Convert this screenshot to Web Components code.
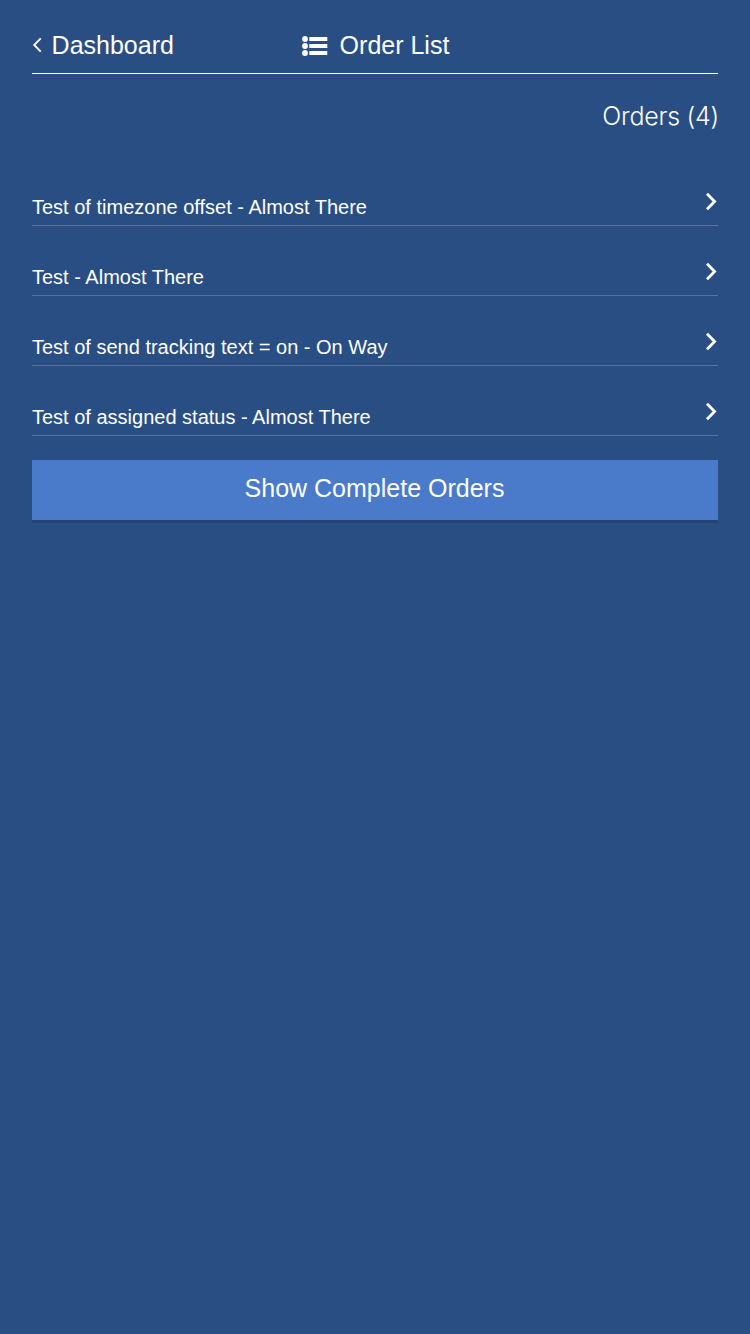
<!DOCTYPE html>
<html lang="en">
<head>
<meta charset="utf-8">
<title>Order List</title>
<style>
  html, body { margin: 0; min-height: 100%; background: #294e84; }
  body { color: #fff; font-family: "Liberation Sans", Arial, sans-serif; }
</style>
</head>
<body>
<order-app>
  <page-header slot="header" back="Dashboard">Order List</page-header>
  <order-count slot="count">Orders (4)</order-count>
  <order-row>Test of timezone offset - Almost There</order-row>
  <order-row>Test - Almost There</order-row>
  <order-row>Test of send tracking text = on - On Way</order-row>
  <order-row>Test of assigned status - Almost There</order-row>
  <action-button slot="action">Show Complete Orders</action-button>
</order-app>
<script>
const define = (name, html) => customElements.define(name, class extends HTMLElement {
  constructor() {
    super();
    const t = document.createElement('template');
    t.innerHTML = html;
    this.attachShadow({ mode: 'open' }).append(t.content.cloneNode(true));
    const back = this.shadowRoot.querySelector('.label');
    if (back) back.textContent = this.getAttribute('back');
  }
});

define('order-app', `
<style>
  :host { display: block; box-sizing: border-box; min-height: 1334px; padding: 17px 32px; }
  .list { padding-top: 20px; }
  .action { padding-top: 24px; }
</style>
<slot name="header"></slot>
<slot name="count"></slot>
<div class="list"><slot></slot></div>
<div class="action"><slot name="action"></slot></div>`);

define('page-header', `
<style>
  :host { display: grid; grid-template-columns: 1fr auto 1fr; height: 56px; align-items: center; border-bottom: 1px solid #fff; font-size: 25px; line-height: 56px; white-space: nowrap; }
  .back, .title { display: flex; align-items: center; }
  .back { gap: 9.6px; }
  .title { gap: 11.6px; padding-left: 1.4px; }
  svg { display: block; flex: none; }
  .title svg { margin-top: 2px; }
</style>
<div class="back">
  <svg width="10" height="18" viewBox="0 0 10 18"><path d="M8.7 2.3 2.2 9l6.5 6.7" fill="none" stroke="#fff" stroke-width="1.9"/></svg>
  <span class="label"></span>
</div>
<div class="title">
  <svg width="26" height="20" viewBox="0 0 26 20" fill="#fff"><circle cx="3" cy="3" r="2.9"/><circle cx="3" cy="10" r="2.9"/><circle cx="3" cy="17" r="2.9"/><path d="M7.3 1H25.3V5H7.3ZM7.3 8H25.3V12H7.3ZM7.3 15H25.3V19H7.3Z"/></svg>
  <span><slot></slot></span>
</div>
<div></div>`);

define('order-count', `
<style>
  :host { display: block; height: 82px; margin-right: -1px; text-align: right; font: 300 25px/84px Inter, sans-serif; letter-spacing: -.25px; }
</style>
<slot></slot>`);

define('order-row', `
<style>
  :host { display: flex; box-sizing: border-box; height: 70px; justify-content: space-between; border-bottom: 1px solid #5673a0; font-size: 20px; white-space: nowrap; }
  :host(:first-of-type) { height: 50px; }
  span { align-self: flex-end; line-height: 24px; margin-bottom: 6px; }
  svg { display: block; align-self: flex-end; margin-bottom: 14px; }
</style>
<span><slot></slot></span>
<svg width="14" height="20" viewBox="0 0 14 20"><path d="M3 2.8 10.6 10.5 3 18.2" fill="none" stroke="#fff" stroke-width="2.8"/></svg>`);

define('action-button', `
<style>
  :host { display: block; box-sizing: border-box; height: 60px; padding-right: 1px; background: #4a7bca; box-shadow: 0 3px 0 #254374; text-align: center; font-size: 25px; line-height: 57px; }
</style>
<slot></slot>`);
</script>
</body>
</html>
